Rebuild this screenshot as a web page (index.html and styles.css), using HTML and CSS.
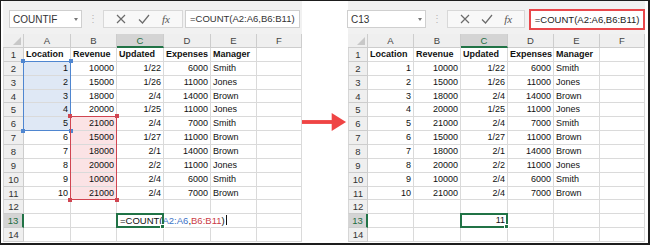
FILE: index.html
```html
<!DOCTYPE html>
<html lang="en">
<head>
  <meta charset="UTF-8" />
  <title>COUNT across two ranges</title>
  <link rel="stylesheet" href="styles.css">
</head>
<body>

  <div class="frame">

    <section class="sheet sheet-left">
      <div class="toolbar">
        <div class="namebox"><span>COUNTIF</span><span class="caret"></span></div>
        <div class="grip">⋮</div>
        <div class="actions">
          <svg class="ico" width="10" height="10" viewBox="0 0 10 10"><path d="M1 1 L9 9 M9 1 L1 9" /></svg>
          <svg class="ico" width="12" height="10" viewBox="0 0 12 10"><path d="M1 5.5 L4.5 9 L11 1" /></svg>
          <span class="fx">fx</span>
        </div>
        <div class="formula">=COUNT(A2:A6,B6:B11)</div>
      </div>
      <div class="grid-wrap">
        <div class="grid" id="gridLeft"></div>
        <div class="grid overlay">
          <div class="range range-blue">
            <i class="h tl"></i><i class="h tr"></i><i class="h bl"></i><i class="h br"></i>
          </div>
          <div class="range range-red">
            <i class="h tl"></i><i class="h tr"></i><i class="h bl"></i><i class="h br"></i>
          </div>
          <div class="edit"><span>=COUNT(<b class="ref-a">A2:A6</b>,<b class="ref-b">B6:B11</b>)<i class="cursor"></i></span></div>
          <div class="active"><i class="h br"></i></div>
        </div>
      </div>
    </section>

    <div class="arrow">
      <svg width="48" height="20" viewBox="0 0 48 20">
        <rect x="0" y="8" width="34" height="4" fill="#ef4444" />
        <polygon points="32,0.5 47,10 32,19.5" fill="#ef4444" />
      </svg>
    </div>

    <section class="sheet sheet-right">
      <div class="toolbar">
        <div class="namebox"><span>C13</span><span class="caret"></span></div>
        <div class="grip">⋮</div>
        <div class="actions">
          <svg class="ico" width="10" height="10" viewBox="0 0 10 10"><path d="M1 1 L9 9 M9 1 L1 9" /></svg>
          <svg class="ico" width="12" height="10" viewBox="0 0 12 10"><path d="M1 5.5 L4.5 9 L11 1" /></svg>
          <span class="fx">fx</span>
        </div>
        <div class="formula marked">=COUNT(A2:A6,B6:B11)</div>
      </div>
      <div class="grid-wrap">
        <div class="grid" id="gridRight"></div>
        <div class="grid overlay">
          <div class="active"><i class="h br"></i></div>
        </div>
      </div>
    </section>

  </div>

  <script>
    const rows = [
      ['Location', 'Revenue', 'Updated', 'Expenses', 'Manager', ''],
      [1, 10000, '1/22', 6000, 'Smith', ''],
      [2, 15000, '1/26', 11000, 'Jones', ''],
      [3, 18000, '2/4', 14000, 'Brown', ''],
      [4, 20000, '1/25', 11000, 'Jones', ''],
      [5, 21000, '2/4', 7000, 'Smith', ''],
      [6, 15000, '1/27', 11000, 'Brown', ''],
      [7, 18000, '2/1', 14000, 'Brown', ''],
      [8, 20000, '2/2', 11000, 'Jones', ''],
      [9, 10000, '2/4', 6000, 'Smith', ''],
      [10, 21000, '2/4', 7000, 'Brown', ''],
      ['', '', '', '', '', ''],
      ['', '', '', '', '', ''],
      ['', '', '', '', '', '']
    ];
    const letters = ['A', 'B', 'C', 'D', 'E', 'F'];

    function cell(grid, text, cls) {
      const div = document.createElement('div');
      div.className = cls;
      div.textContent = text;
      grid.appendChild(div);
    }

    function buildGrid(id, extra, fills) {
      const grid = document.getElementById(id);
      cell(grid, '', 'hd corner');
      letters.forEach(l => cell(grid, l, l === 'C' ? 'hd on' : 'hd'));

      rows.forEach((row, i) => {
        const r = i + 1;
        cell(grid, r, r === 13 ? 'rh on' : 'rh');
        row.forEach((val, j) => {
          const key = letters[j] + r;
          let v = extra[key] ?? val;
          let cls = 'c';
          if (r === 1) cls += ' bold';
          if (typeof v === 'number' || /\d\/\d/.test(v)) cls += ' num';
          if (fills[key]) cls += ' ' + fills[key];
          cell(grid, v, cls);
        });
      });
    }

    const leftFills = {};
    for (let r = 2; r <= 6; r++) leftFills['A' + r] = 'fill-blue';
    for (let r = 6; r <= 11; r++) leftFills['B' + r] = 'fill-red';
    leftFills['D13'] = 'no-line';

    buildGrid('gridLeft', {}, leftFills);
    buildGrid('gridRight', { C13: 11 }, {});
  </script>

</body>
</html>
```

FILE: styles.css
```css
body {
  margin: 0;
  font-family: "Liberation Sans", Arial, sans-serif;
  background: #fff;
}

.frame {
  width: 650px;
  height: 245px;
  box-sizing: border-box;
  border: solid #1d1d1d;
  border-width: 1px 2px 2px 1px;
  padding-left: 2px;
  display: flex;
  background: #fff;
}

.sheet-left {
  width: 299px;
  --cols: 21px 47px 46px 47px 47px 46px 45px;
}

.sheet-right {
  width: 297px;
  --cols: 20px 46px 47px 47px 46px 46px 45px;
}

.arrow {
  width: 46px;
  display: flex;
  align-items: center;
  margin-left: -1px;
  margin-right: 1px;
}

/* toolbar */

.toolbar {
  height: 33px;
  box-sizing: border-box;
  background: #f1f1f1;
  display: flex;
  align-items: flex-start;
  padding-top: 9px;
  color: #333;
}

.namebox {
  height: 18px;
  box-sizing: border-box;
  background: #fff;
  border: 1px solid #cfcfcf;
  display: flex;
  align-items: center;
  justify-content: space-between;
  padding: 0 3px 0 3px;
  font-size: 10px;
}

.caret {
  width: 0;
  height: 0;
  border-left: 2.5px solid transparent;
  border-right: 2.5px solid transparent;
  border-top: 3px solid #777;
}

.grip {
  font-size: 10px;
  line-height: 18px;
  color: #b5b5b5;
  text-align: center;
  width: 21px;
}

.actions {
  height: 18px;
  box-sizing: border-box;
  border: 1px solid #d8d8d8;
  background: #f8f8f8;
  display: flex;
  align-items: center;
  justify-content: space-around;
  padding: 0 6px;
}

.ico path {
  fill: none;
  stroke: #6b6b6b;
  stroke-width: 1.2;
}

.fx {
  font-family: "Liberation Serif", serif;
  font-style: italic;
  font-size: 11px;
  color: #555;
}

.formula {
  height: 18px;
  box-sizing: border-box;
  background: #fff;
  border: 1px solid #cfcfcf;
  font-size: 9.5px;
  line-height: 16px;
  padding-left: 4px;
  margin-left: 2px;
  color: #333;
  white-space: nowrap;
}

.sheet-left .namebox { width: 73px; margin-left: 6px; }
.sheet-left .actions { width: 80px; }
.sheet-left .formula { width: 115px; }

.sheet-right .namebox { width: 80px; margin-left: -1px; }
.sheet-right .grip { width: 21px; }
.sheet-right .actions { width: 78px; }
.sheet-right .formula { width: 117px; margin-left: 4px; }

.formula.marked {
  border: 2px solid #e9474b;
  height: 21px;
  margin-top: -1px;
  line-height: 17px;
  padding-left: 4px;
  color: #222;
}

/* grid */

.grid-wrap {
  position: relative;
}

.grid {
  display: grid;
  grid-template-columns: var(--cols);
  grid-template-rows: 14px repeat(14, 13.86px);
}

.overlay {
  position: absolute;
  inset: 0;
  pointer-events: none;
}

.c, .hd, .rh {
  box-sizing: border-box;
  border-right: 1px solid #dadada;
  border-bottom: 1px solid #dadada;
  font-size: 9px;
  line-height: 13px;
  white-space: nowrap;
  color: #111;
}

.c {
  padding: 0 2px;
}

.num {
  text-align: right;
}

.bold {
  font-weight: bold;
}

.hd {
  background: #efefef;
  border-color: #cdcdcd;
  color: #444;
  font-size: 9.5px;
  text-align: center;
  line-height: 14px;
}

.hd.corner {
  position: relative;
}

.hd.corner::after {
  content: "";
  position: absolute;
  right: 2px;
  bottom: 2px;
  border-left: 8px solid transparent;
  border-bottom: 8px solid #c8c8c8;
}

.rh {
  background: #efefef;
  border-color: #cdcdcd;
  border-left: 1px solid #d6d6d6;
  color: #333;
  font-size: 9.5px;
  text-align: center;
}

.hd.on {
  background: #d4d4d4;
  border-bottom: 2px solid #217346;
  color: #1d6d41;
}

.rh.on {
  background: #d4d4d4;
  border-right: 2px solid #217346;
  color: #1d6d41;
}

.fill-blue {
  background: #dfe8f5;
}

.fill-red {
  background: #fbe3e5;
}

.no-line {
  border-right-color: transparent;
}

/* overlays */

.range {
  position: relative;
  margin: -1px 0 0 -1px;
}

.range-blue {
  grid-column: 2 / 3;
  grid-row: 3 / 8;
  border: 1.5px solid #4f86d0;
}

.range-red {
  grid-column: 3 / 4;
  grid-row: 7 / 13;
  border: 1.5px solid #d04551;
}

.h {
  position: absolute;
  width: 4px;
  height: 4px;
}

.range-blue .h { background: #4f86d0; }
.range-red .h { background: #d04551; }

.h.tl { left: -3px; top: -3px; }
.h.tr { right: -3px; top: -3px; }
.h.bl { left: -3px; bottom: -3px; }
.h.br { right: -3px; bottom: -3px; }

.active {
  grid-column: 4 / 5;
  grid-row: 14 / 15;
  position: relative;
  margin: -1px 0 0 -1px;
  border: 2px solid #217346;
}

.active .h {
  background: #217346;
  border: 1px solid #fff;
  width: 3px;
  height: 3px;
}

.edit {
  grid-column: 4 / 7;
  grid-row: 14 / 15;
  font-size: 9.5px;
  line-height: 13px;
  padding-left: 3px;
  white-space: nowrap;
}

.edit span {
  background: #fff;
  color: #111;
}

.edit b {
  font-weight: normal;
}

.ref-a { color: #3d73c7; }
.ref-b { color: #cb3b47; }

.cursor {
  display: inline-block;
  width: 1px;
  height: 10px;
  background: #111;
  vertical-align: -1px;
  margin-left: 1px;
}
```
